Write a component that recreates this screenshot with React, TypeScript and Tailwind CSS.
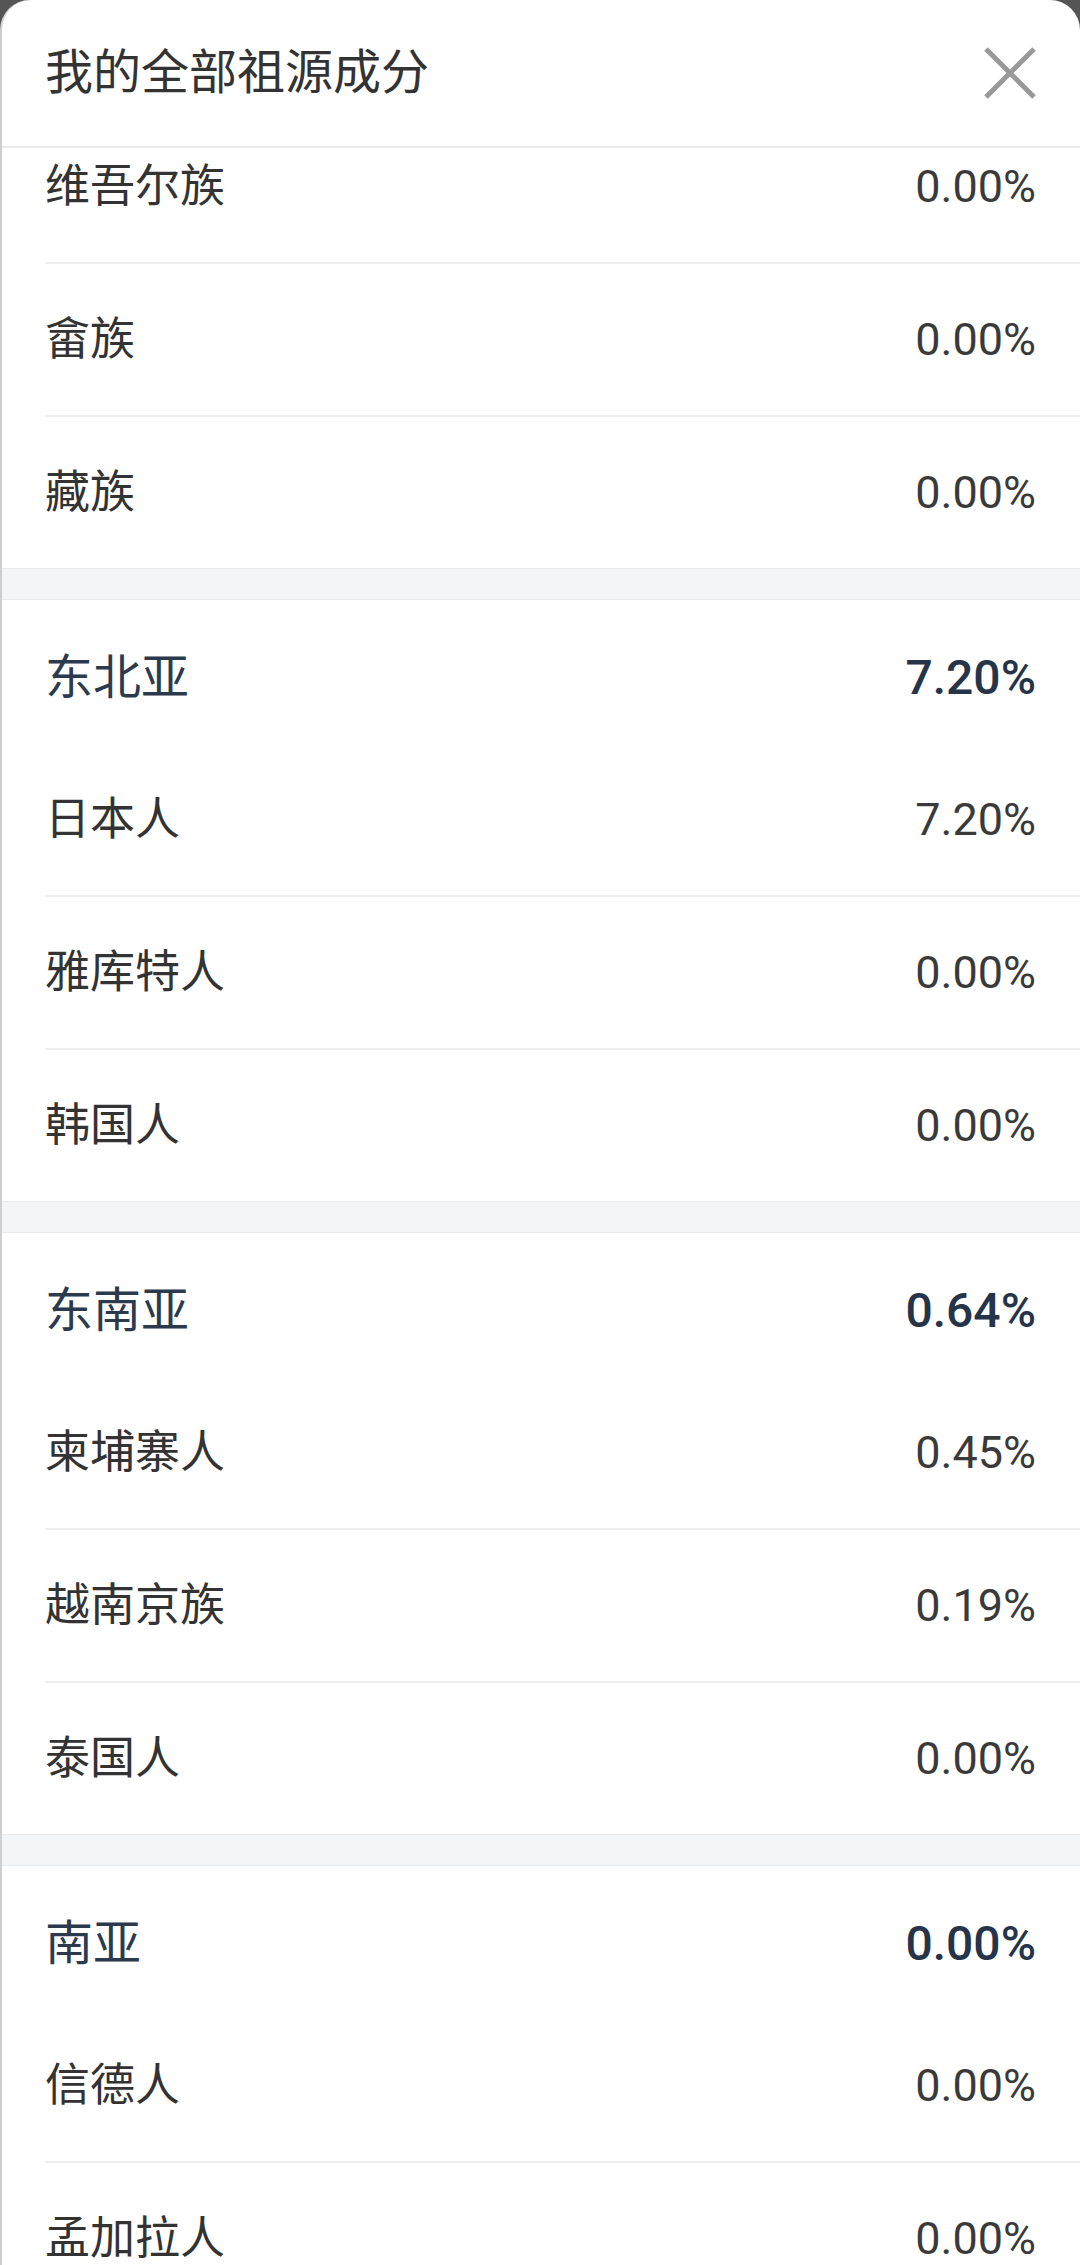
import React from 'react'

type Row = { name: string; value: string }
type Section = { title?: string; total?: string; rows: Row[] }

const sections: Section[] = [
  {
    rows: [
      { name: '维吾尔族', value: '0.00%' },
      { name: '畲族', value: '0.00%' },
      { name: '藏族', value: '0.00%' }
    ]
  },
  {
    title: '东北亚',
    total: '7.20%',
    rows: [
      { name: '日本人', value: '7.20%' },
      { name: '雅库特人', value: '0.00%' },
      { name: '韩国人', value: '0.00%' }
    ]
  },
  {
    title: '东南亚',
    total: '0.64%',
    rows: [
      { name: '柬埔寨人', value: '0.45%' },
      { name: '越南京族', value: '0.19%' },
      { name: '泰国人', value: '0.00%' }
    ]
  },
  {
    title: '南亚',
    total: '0.00%',
    rows: [
      { name: '信德人', value: '0.00%' },
      { name: '孟加拉人', value: '0.00%' }
    ]
  }
]

const CloseIcon = () => (
  <svg width="54" height="54" viewBox="0 0 54 54" fill="none">
    <path d="M3 3L51 51M51 3L3 51" stroke="#999999" strokeWidth="5" />
  </svg>
)

const AncestryRow = ({ row, last }: { row: Row; last: boolean }) => (
  <div
    className={`ml-[43px] flex items-center justify-between pr-[44px] ${
      last ? 'h-[151px]' : 'h-[153px] border-b-2 border-[#eceef1]'
    }`}
  >
    <span className="text-[45px] text-[#333333] leading-none">{row.name}</span>
    <span className="text-[45px] text-[#3a3a3a] leading-none">{row.value}</span>
  </div>
)

export default function App() {
  return (
    <div
      className="w-[1080px] h-[2265px] bg-[#555555] overflow-hidden"
      style={{ fontFamily: 'Roboto, "Noto Sans CJK SC", sans-serif' }}
    >
      <div className="h-full bg-white rounded-t-[30px] border-l-2 border-[#cfcfcf] flex flex-col overflow-hidden">
        <div className="h-[148px] shrink-0 border-b-2 border-[#ebebeb] flex items-center justify-between pl-[43px] pr-[43px]">
          <span className="text-[48px] text-[#333333] leading-none">我的全部祖源成分</span>
          <CloseIcon />
        </div>

        <div className="flex-1 overflow-hidden">
          <div className="-mt-[37px]">
            {sections.map((section, i) => (
              <div key={i}>
                {i > 0 && (
                  <div className="h-[32px] bg-[#f3f6f9] border-y border-[#e9ecef]" />
                )}
                {section.title && (
                  <div className="h-[144px] pt-[12px] ml-[43px] pr-[44px] flex items-center justify-between">
                    <span className="text-[48px] text-[#2c3a4e] leading-none">{section.title}</span>
                    <span className="text-[48px] font-medium text-[#26344a] leading-none">
                      {section.total}
                    </span>
                  </div>
                )}
                {section.rows.map((row, j) => (
                  <AncestryRow key={row.name} row={row} last={j === section.rows.length - 1} />
                ))}
              </div>
            ))}
          </div>
        </div>
      </div>
    </div>
  )
}
